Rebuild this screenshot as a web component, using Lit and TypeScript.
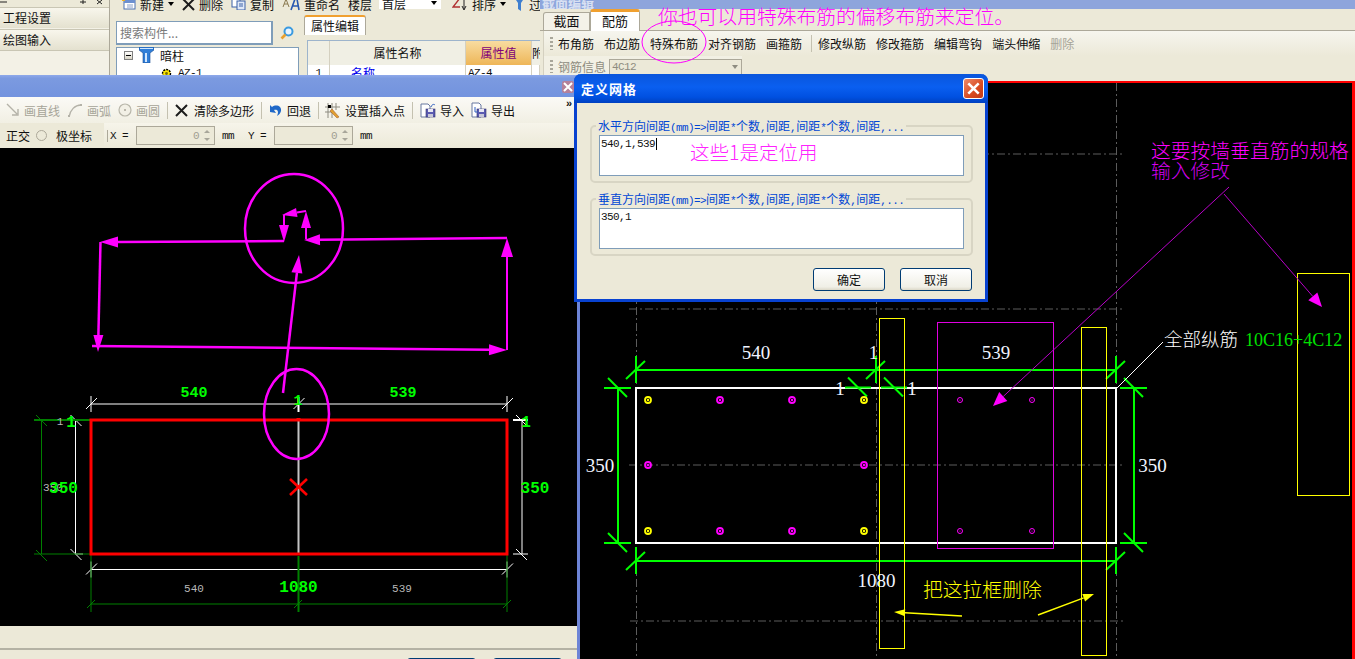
import { LitElement, html, svg, css } from "lit";
import { customElement } from "lit/decorators.js";

const MAGENTA = "#ff00ff";
const GREEN = "#00ff00";
const DKGREEN = "#008000";
const YELLOW = "#ffff00";

type Pt = [number, number];

function line(a: Pt, b: Pt, color: string, w = 1) {
  return svg`<line x1=${a[0]} y1=${a[1]} x2=${b[0]} y2=${b[1]} stroke=${color} stroke-width=${w} />`;
}

// line with a filled head at its end
function arrow(from: Pt, to: Pt, color: string, w: number, len: number, half: number, head = color) {
  const dx = to[0] - from[0];
  const dy = to[1] - from[1];
  const d = Math.hypot(dx, dy);
  const ux = dx / d;
  const uy = dy / d;
  const bx = to[0] - ux * len;
  const by = to[1] - uy * len;
  const pts = `${to[0]},${to[1]} ${bx - uy * half},${by + ux * half} ${bx + uy * half},${by - ux * half}`;
  return svg`${line(from, [bx, by], color, w)}<polygon points=${pts} fill=${head} />`;
}

function label(x: number, y: number, text: string, cls: string, anchor = "start") {
  return svg`<text x=${x} y=${y} class=${cls} text-anchor=${anchor}>${text}</text>`;
}

function rebar(x: number, y: number, color: string) {
  return svg`<circle cx=${x} cy=${y} r="3" fill="none" stroke=${color} stroke-width="1.8" /><circle cx=${x} cy=${y} r="1.2" fill=${color} />`;
}

const ICONS: Record<string, unknown> = {
  lineOff: svg`<svg width="14" height="14" viewBox="0 0 14 14"><path d="M1 1 L11 11 M12 6 V12 H6" fill="none" stroke="#b4b2a8" stroke-width="1.4"/></svg>`,
  arcOff: svg`<svg width="16" height="15" viewBox="0 0 16 15"><path d="M2 14 C3 7 8 2 14 2" fill="none" stroke="#b4b2a8" stroke-width="1.4"/><rect x="1" y="12" width="2" height="2" fill="#b4b2a8"/><rect x="13" y="1" width="2" height="2" fill="#b4b2a8"/></svg>`,
  circleOff: svg`<svg width="14" height="14" viewBox="0 0 14 14"><circle cx="7" cy="7" r="6" fill="#f2f0e6" stroke="#b8b6aa" stroke-width="1.2"/><circle cx="7" cy="7" r="1" fill="#a8a69a"/></svg>`,
  cross: svg`<svg width="13" height="13" viewBox="0 0 13 13"><path d="M1 1 L12 12 M12 1 L1 12" stroke="#1c1c1c" stroke-width="2"/></svg>`,
  undo: svg`<svg width="14" height="14" viewBox="0 0 14 14"><path d="M3 4 C7 1 13 3 12 8 C11.500 10 10 12 8 13 C10 9 9 6 5 7 L7 10 L1 9 L1 2 Z" fill="#1f68c8"/></svg>`,
  insert: svg`<svg width="17" height="17" viewBox="0 0 17 17"><path d="M4 1 V16 M8 1 V16 M12 1 V8 M1 5 H16 M1 10 H9" stroke="#8d8b80" stroke-width="1" fill="none"/><rect x="4" y="3" width="3" height="3" fill="#000"/><path d="M8 7 L15 15 L13 16 L6 9 Z" fill="#e0a030" stroke="#a05020" stroke-width="0.5"/></svg>`,
  importFile: svg`<svg width="16" height="16" viewBox="0 0 16 16"><path d="M1 2 H8 L10 4 V15 H1 Z" fill="#fff" stroke="#6878a0"/><rect x="6" y="7" width="9" height="8" fill="#5a5ab0" stroke="#33336f" stroke-width="0.6"/><rect x="8" y="7" width="5" height="3" fill="#e8e8f4"/><rect x="8" y="12" width="5" height="3" fill="#c8c8d8"/><path d="M11 5 C12 2 14 2 15 3" fill="none" stroke="#3060c0"/></svg>`,
  exportFile: svg`<svg width="16" height="16" viewBox="0 0 16 16"><path d="M1 1 H8 L10 3 V15 H1 Z" fill="#fff" stroke="#6878a0"/><rect x="6" y="7" width="9" height="8" fill="#5a5ab0" stroke="#33336f" stroke-width="0.6"/><rect x="8" y="7" width="5" height="3" fill="#e8e8f4"/><rect x="8" y="12" width="5" height="3" fill="#c8c8d8"/><path d="M4 5 V10 H7" fill="none" stroke="#3060c0"/></svg>`,
  newItem: svg`<svg width="14" height="12" viewBox="0 0 14 12"><rect x="2" y="2" width="11" height="9" fill="#fff" stroke="#4a70b0"/><rect x="2" y="2" width="11" height="3" fill="#6c90d0"/><rect x="0" y="0" width="3" height="3" fill="#f0b020"/><path d="M5 7 H11 M5 9 H11" stroke="#8aa0c8"/></svg>`,
  copy: svg`<svg width="15" height="12" viewBox="0 0 15 12"><rect x="1" y="0" width="8" height="9" fill="#fff" stroke="#3d62a8"/><rect x="6" y="3" width="8" height="9" fill="#dfe8f8" stroke="#3d62a8"/><path d="M8 6 H12 M8 8 H12" stroke="#3d62a8"/></svg>`,
  rename: svg`<svg width="18" height="14" viewBox="0 0 18 14"><path d="M1 10 L4 2 L7 10 M2 7 H6" fill="none" stroke="#8a7a50"/><path d="M9 13 L13 2 H15 L17 13 M11 9 H16" fill="none" stroke="#2858b0" stroke-width="1.6"/></svg>`,
  sort: svg`<svg width="16" height="14" viewBox="0 0 16 14"><path d="M1 1 H8 L1 10 H8" fill="none" stroke="#b03030" stroke-width="1.4"/><path d="M12 1 V12 M10 9 L12 13 L14 9" fill="none" stroke="#222"/></svg>`,
  filter: svg`<svg width="11" height="14" viewBox="0 0 11 14"><path d="M0 0 H11 L7 6 V14 L4 12 V6 Z" fill="#3f7fd0"/></svg>`,
  find: svg`<svg width="14" height="14" viewBox="0 0 14 14"><circle cx="8.500" cy="5.500" r="4" fill="#e8f4ff" stroke="#3a9ae0" stroke-width="2"/><path d="M5.500 8.500 L1.500 12.500" stroke="#e8a030" stroke-width="2.600"/></svg>`,
  column: svg`<svg width="15" height="16" viewBox="0 0 15 16"><path d="M0 0 H15 V3 L11 6 V16 H4 V6 L0 3 Z" fill="#2f7ed8" stroke="#1c4f96" stroke-width="0.6"/><rect x="6" y="6" width="2" height="9" fill="#cfe6ff"/><rect x="1" y="1" width="13" height="1" fill="#cfe6ff"/></svg>`,
  gear: svg`<svg width="11" height="11" viewBox="0 0 11 11"><circle cx="5.500" cy="5.500" r="4" fill="#ffe800" stroke="#000" stroke-width="1.4" stroke-dasharray="2 1"/><circle cx="5.500" cy="5.500" r="1.400" fill="#7a7000"/></svg>`,
  paneMarks: svg`<svg width="110" height="7" viewBox="0 0 110 7"><path d="M0 2 H7 M83 0 V4 M80 2 H86 M97 0 L102 4 M102 0 L97 4" stroke="#222" fill="none"/></svg>`,
};

const DRAW_TOOLS: (null | { icon: string; text: string; off?: boolean })[] = [
  { icon: "lineOff", text: "画直线", off: true },
  { icon: "arcOff", text: "画弧", off: true },
  { icon: "circleOff", text: "画圆", off: true },
  null,
  { icon: "cross", text: "清除多边形" },
  null,
  { icon: "undo", text: "回退" },
  null,
  { icon: "insert", text: "设置插入点" },
  null,
  { icon: "importFile", text: "导入" },
  { icon: "exportFile", text: "导出" },
];

const REBAR_TOOLS = ["布角筋", "布边筋", "特殊布筋", "对齐钢筋", "画箍筋", "|", "修改纵筋", "修改箍筋", "编辑弯钩", "端头伸缩"];

@customElement("app-root")
export class AppRoot extends LitElement {
  static styles = css`
    :host {
      display: block;
      width: 1355px;
      height: 659px;
      position: relative;
      overflow: hidden;
      background: #000;
      font-family: "Noto Sans CJK SC", "Liberation Sans", sans-serif;
      font-size: 12px;
      color: #111;
    }
    .hw,
    .coord,
    .tree-mono,
    .prop-text,
    .field,
    .info-select,
    .spin {
      font-family: "Liberation Mono", monospace;
      font-size: 11px;
      letter-spacing: -0.6px;
    }

    /* windows */
    .win {
      position: absolute;
      overflow: hidden;
      background: #ece9d8;
      display: flex;
      flex-direction: column;
    }
    .win-project {
      left: 0;
      top: 0;
      width: 540px;
      height: 75px;
      flex-direction: row;
    }
    .win-section {
      left: 540px;
      top: 0;
      width: 815px;
      height: 659px;
    }
    .win-poly {
      left: 0;
      top: 75px;
      width: 580px;
      height: 584px;
      border-right: 3px solid #6d84d6;
      box-sizing: border-box;
    }

    /* project window */
    .side {
      width: 110px;
      flex: none;
      box-sizing: border-box;
      border-right: 1px solid #aca899;
      background: #f3f1e6;
    }
    .side-head {
      height: 7px;
      background: #ece9d8;
      overflow: hidden;
    }
    .side-head svg {
      display: block;
    }
    .side-btn {
      height: 21px;
      line-height: 20px;
      padding-left: 3px;
      background: linear-gradient(#f8f6ec, #e4e1cf);
      border-top: 1px solid #c9c6b4;
      box-sizing: border-box;
    }
    .side-btn + .side-btn {
      margin-top: 1px;
      border-bottom: 1px solid #c9c6b4;
      height: 22px;
    }
    .project-main {
      flex: 1;
      min-width: 0;
      display: flex;
      flex-direction: column;
    }
    .top-tools {
      height: 8px;
      margin-bottom: 6px;
      display: flex;
      align-items: center;
      gap: 4px;
      padding-left: 12px;
      white-space: nowrap;
    }
    .top-tools > * {
      flex: none;
    }
    .top-gap {
      margin-left: 4px;
      display: flex;
    }
    .caret {
      width: 0;
      height: 0;
      border: 3px solid transparent;
      border-top: 4px solid #000;
      border-bottom: 0;
    }
    .floor {
      width: 62px;
      height: 22px;
      margin-top: -12px;
      background: #fff;
      padding: 12px 4px 0 3px;
      box-sizing: border-box;
      line-height: 10px;
      margin-left: 3px;
      margin-right: 3px;
      display: flex;
      justify-content: space-between;
      align-items: flex-start;
    }
    .floor .caret {
      margin-top: 2px;
    }
    .project-body {
      flex: 1;
      display: flex;
      min-height: 0;
    }
    .tree-col {
      width: 183px;
      margin-left: 6px;
      margin-top: 7px;
      flex: none;
      display: flex;
      flex-direction: column;
    }
    .search {
      display: flex;
      align-items: center;
      height: 24px;
      gap: 4px;
    }
    .search-input {
      width: 157px;
      height: 24px;
      box-sizing: border-box;
      border: 1px solid #7f9db9;
      border-width: 1px 2px 2px 1px;
      background: #fff;
      color: #7a7a7a;
      padding-left: 3px;
      line-height: 21px;
    }
    .search svg {
      margin-left: 3px;
    }
    .tree {
      margin-top: 2px;
      flex: 1;
      border: 1px solid #7f9db9;
      background: #fff;
      box-sizing: border-box;
      padding-left: 7px;
    }
    .tree-row {
      display: flex;
      align-items: center;
      height: 16px;
      gap: 6px;
      margin-top: -1px;
    }
    .tree-row + .tree-row {
      padding-left: 37px;
      margin-top: 2px;
    }
    .expander {
      width: 9px;
      height: 9px;
      border: 1px solid #808080;
      background: linear-gradient(#fff, #d8d4c4);
      box-sizing: border-box;
      position: relative;
    }
    .expander::after {
      content: "";
      position: absolute;
      left: 1px;
      right: 1px;
      top: 3px;
      height: 1px;
      background: #000;
    }
    .props {
      flex: 1;
      margin-left: 5px;
      padding-top: 1px;
      min-width: 0;
    }
    .prop-tab {
      width: 62px;
      height: 20px;
      box-sizing: border-box;
      background: #fff;
      border: 1px solid #aca899;
      border-top: 2px solid #f0a030;
      border-bottom: 0;
      border-radius: 3px 3px 0 0;
      padding-left: 6px;
      line-height: 18px;
    }
    .prop-table {
      margin: 5px 0 0 3px;
      border: 1px solid #9db4cc;
      border-right: 0;
      height: 40px;
      background: #fff;
    }
    .prop-row {
      display: grid;
      grid-template-columns: 22px 136px 66px 1fr;
      height: 24px;
      line-height: 24px;
      text-align: center;
    }
    .prop-row + .prop-row {
      line-height: 16px;
      height: 16px;
    }
    .prop-row > div {
      border-right: 1px solid #d4d0c0;
      white-space: nowrap;
    }
    .prop-head > div {
      background: #f0efe4;
    }
    .prop-head > .prop-value {
      background: linear-gradient(#f8dca0, #eeb658);
      color: #80007a;
    }
    .prop-name {
      color: #0000ee;
      text-align: left;
      padding-left: 21px;
    }
    .prop-text {
      text-align: left;
      padding-left: 2px;
    }

    /* title bars */
    .title {
      flex: none;
      background: linear-gradient(#8fa9ea 0, #7b9ae0 15%, #7393de 100%);
      position: relative;
    }
    .title-poly {
      height: 22px;
    }
    .title-section {
      height: 9px;
      background: #8ea5dc;
      color: #d8e0f2;
      line-height: 5px;
      padding-left: 2px;
      font-size: 13px;
      font-weight: 700;
      overflow: hidden;
    }
    .close-off {
      position: absolute;
      left: 562px;
      top: 6px;
      width: 12px;
      height: 12px;
      border-radius: 2px;
      background: #b4809a;
      display: grid;
      place-items: center;
    }

    /* draw window toolbars */
    .bar {
      flex: none;
      display: flex;
      align-items: center;
      white-space: nowrap;
    }
    .bar-draw {
      height: 26px;
      gap: 7px;
      padding-left: 6px;
      background: linear-gradient(#fbfaf6, #f1efe3);
      position: relative;
    }
    .bar-draw .tool:nth-child(5) {
      gap: 6px;
    }
    .bar-draw .sep:nth-child(8) {
      margin-right: -2px;
    }
    .bar-input {
      height: 25px;
      background: linear-gradient(#f6f4ea, #ece9d8);
    }
    .tool {
      display: flex;
      align-items: center;
      gap: 4px;
    }
    .off {
      color: #a6a498;
    }
    .sep {
      width: 1px;
      height: 17px;
      background: #c4c1b0;
      flex: none;
    }
    .more {
      position: absolute;
      left: 566px;
      top: 0;
      font-family: "Liberation Sans", sans-serif;
      font-weight: 700;
      font-size: 11px;
    }
    .ortho {
      width: 104px;
      height: 100%;
      flex: none;
      display: flex;
      align-items: center;
      box-sizing: border-box;
      padding-left: 6px;
      background: #ece9d8;
    }
    .radio {
      width: 11px;
      height: 11px;
      border-radius: 50%;
      border: 1px solid #aca899;
      box-sizing: border-box;
      margin: 0 9px 0 6px;
    }
    .coord-x {
      margin-left: 3px;
      padding-left: 2px;
      border-left: 1px solid #aca899;
      width: 26px;
      flex: none;
    }
    .coord-y {
      width: 26px;
      flex: none;
      margin-left: 14px;
    }
    .spin {
      width: 79px;
      height: 19px;
      flex: none;
      box-sizing: border-box;
      border: 1px solid #aca899;
      background: #ece9d8;
      display: flex;
      justify-content: flex-end;
      align-items: center;
      color: #a09e92;
      margin-right: 7px;
      gap: 5px;
      padding-right: 4px;
    }
    .spin-arrows {
      display: flex;
      flex-direction: column;
      gap: 5px;
    }
    .spin-arrows i {
      display: block;
      width: 0;
      height: 0;
      border: 3px solid transparent;
    }
    .spin-arrows i:first-child {
      border-bottom: 3px solid #a8a69a;
      border-top: 0;
    }
    .spin-arrows i:last-child {
      border-top: 3px solid #a8a69a;
      border-bottom: 0;
    }
    .canvas {
      flex: none;
      display: block;
      background: #000;
    }
    .poly-foot {
      flex: 1;
      border-top: 0;
      position: relative;
    }
    .poly-rule {
      margin-top: 22px;
      height: 2px;
      background: #b4b2a4;
    }
    .poly-actions {
      display: flex;
      gap: 17px;
      padding: 8px 0 0 407px;
    }
    .poly-actions span {
      width: 69px;
      height: 8px;
      flex: none;
      box-sizing: border-box;
      border: 1px solid #003c74;
      border-radius: 3px 3px 0 0;
      background: #f8f7f2;
    }

    /* section window */
    .tabs {
      flex: none;
      height: 22px;
      display: flex;
      align-items: flex-end;
      padding-left: 3px;
      box-sizing: border-box;
      border-bottom: 1px solid #aca899;
    }
    .tab {
      width: 47px;
      height: 18px;
      box-sizing: border-box;
      text-align: center;
      background: #f4f2e8;
      border: 1px solid #aca899;
      border-bottom: 0;
      border-radius: 3px 0 0 0;
      line-height: 16px;
      font-size: 13px;
    }
    .tab-on {
      width: 50px;
      height: 22px;
      margin-bottom: -1px;
      background: #fff;
      border-top: 3px solid #f0a030;
      border-radius: 3px 3px 0 0;
      line-height: 17px;
    }
    .rebar-bars {
      flex: none;
      height: 50px;
      margin-left: 3px;
      border-left: 1px solid #d4d0c0;
    }
    .bar-rebar {
      height: 25px;
      padding-left: 6px;
      background: linear-gradient(#f6f5ee, #ece9d8);
      gap: 10px;
    }
    .bar-rebar .sep {
      margin-right: -4px;
      margin-left: -1px;
    }
    .grip {
      width: 3px;
      height: 13px;
      flex: none;
      background: repeating-linear-gradient(#a8a69a 0 2px, transparent 2px 4px);
    }
    .bar-rebar .grip {
      margin-right: -5px;
    }
    .bar-info {
      height: 21px;
      padding-left: 6px;
      width: 198px;
      box-sizing: border-box;
      background: #f2f0e4;
      gap: 5px;
      color: #8e8c80;
    }
    .info-select {
      width: 133px;
      height: 16px;
      box-sizing: border-box;
      border: 1px solid #aca899;
      background: #ece9d8;
      display: flex;
      align-items: center;
      justify-content: space-between;
      padding: 0 3px 0 2px;
      margin-left: -2px;
    }
    .info-select .caret {
      margin: 0;
      border-top-color: #8e8c80;
    }
    .canvas-wrap {
      flex: none;
      margin-left: 38px;
      height: 578px;
      background: #000;
      border-top: 2px solid #f00;
      border-right: 3px solid #f00;
      border-left: 2px solid #6d84d6;
    }

    /* grid dialog */
    .dialog {
      position: absolute;
      left: 574px;
      top: 74px;
      width: 414px;
      height: 228px;
      box-sizing: border-box;
      border: 3px solid #0842d0;
      border-top: 0;
      border-radius: 7px 7px 0 0;
      background: #ece9d8;
      display: flex;
      flex-direction: column;
    }
    .dlg-title {
      flex: none;
      height: 29px;
      margin: 0 -3px;
      border-radius: 7px 7px 0 0;
      background: linear-gradient(#0a56dc 0, #0a5ff0 45%, #0050e0 80%, #0040c0 100%);
      display: flex;
      align-items: center;
      justify-content: space-between;
      padding: 0 4px 0 7px;
      color: #fff;
      font-weight: 700;
      font-size: 13px;
      letter-spacing: 1px;
    }
    .dlg-close {
      width: 21px;
      height: 21px;
      box-sizing: border-box;
      border: 1px solid #fff;
      border-radius: 3px;
      background: linear-gradient(135deg, #ee8a6a, #d84a20 60%, #c03a18);
      display: grid;
      place-items: center;
    }
    .dlg-body {
      flex: 1;
      display: flex;
      flex-direction: column;
      padding: 15px 12px 0 13px;
    }
    fieldset {
      margin: 0 0 8px;
      padding: 0 7px;
      height: 65px;
      box-sizing: border-box;
      border: 2px solid #d8d5c4;
      border-radius: 5px;
      min-width: 0;
    }
    legend {
      padding: 0 2px;
      margin-left: -3px;
      height: 15px;
      color: #0046d5;
      font-size: 12px;
      line-height: 15px;
      white-space: nowrap;
    }
    .field {
      height: 41px;
      box-sizing: border-box;
      margin-top: 2px;
      border: 1px solid #7f9db9;
      background: #fff;
      padding: 1px 1px;
      line-height: 14px;
    }
    .text-caret {
      border-right: 1px solid #000;
      padding-right: 1px;
    }
    .dlg-actions {
      display: flex;
      justify-content: flex-end;
      gap: 15px;
      margin-top: 4px;
      padding-right: 1px;
    }
    .dlg-btn {
      width: 72px;
      height: 23px;
      box-sizing: border-box;
      border: 1px solid #003c74;
      border-radius: 3px;
      background: linear-gradient(#fff, #f0efe6 85%, #dcd8c8);
      display: grid;
      place-items: center;
    }

    /* free canvases */
    svg text {
      font-family: "Noto Sans CJK SC", sans-serif;
    }
    .overlay {
      position: absolute;
      left: 0;
      top: 0;
      pointer-events: none;
    }
    svg .note {
      font-size: 19.800px;
      fill: #ff00ff;
      font-weight: 300;
    }
    svg .note-purple {
      font-size: 19.800px;
      fill: #d400f0;
      font-weight: 300;
    }
    svg .note-yellow {
      font-size: 19.800px;
      fill: #ffff00;
      font-weight: 300;
    }
    svg .dim {
      font-family: "Liberation Serif", serif;
      font-size: 19px;
      fill: #f0f4ff;
    }
    svg .dim-cjk {
      font-size: 18.500px;
      fill: #fff;
      font-weight: 300;
    }
    svg .dim-green {
      font-family: "Liberation Serif", serif;
      font-size: 18px;
      fill: #00e000;
    }
    svg .mono-green {
      font-family: "Liberation Mono", monospace;
      font-size: 15px;
      font-weight: 700;
      fill: #00ff00;
    }
    svg .mono-big {
      font-family: "Liberation Mono", monospace;
      font-size: 16px;
      font-weight: 700;
      fill: #00ff00;
    }
    svg .mono-gray {
      font-family: "Liberation Mono", monospace;
      font-size: 11px;
      fill: #b8b8b8;
    }
    svg .dlg-note {
      font-size: 19.500px;
      fill: #ff22ff;
      font-weight: 300;
    }
  `;

  private projectWindow() {
    return html`<div class="win win-project">
      <div class="side">
        <div class="side-head">${ICONS.paneMarks}</div>
        <div class="side-btn">工程设置</div>
        <div class="side-btn">绘图输入</div>
      </div>
      <div class="project-main">
        <div class="top-tools">
          ${ICONS.newItem}<span>新建</span><i class="caret"></i>
          <span class="top-gap">${ICONS.cross}</span><span>删除</span>
          <span class="top-gap">${ICONS.copy}</span><span>复制</span>
          <span class="top-gap">${ICONS.rename}</span><span>重命名</span>
          <span class="top-gap">楼层</span>
          <div class="floor"><span>首层</span><i class="caret"></i></div>
          <span class="top-gap">${ICONS.sort}</span><span>排序</span><i class="caret"></i>
          <span class="top-gap">${ICONS.filter}</span><span>过滤</span>
        </div>
        <div class="project-body">
          <div class="tree-col">
            <div class="search">
              <div class="search-input">搜索构件...</div>
              ${ICONS.find}
            </div>
            <div class="tree">
              <div class="tree-row"><i class="expander"></i>${ICONS.column}<span>暗柱</span></div>
              <div class="tree-row">${ICONS.gear}<span class="tree-mono">AZ-1</span></div>
            </div>
          </div>
          <div class="props">
            <div class="prop-tab">属性编辑</div>
            <div class="prop-table">
              <div class="prop-row prop-head">
                <div></div><div>属性名称</div><div class="prop-value">属性值</div><div>附加</div>
              </div>
              <div class="prop-row">
                <div class="tree-mono">1</div><div class="prop-name">名称</div><div class="prop-text">AZ-4</div><div></div>
              </div>
            </div>
          </div>
        </div>
      </div>
    </div>`;
  }

  private polyDrawing() {
    const wTick = (x: number, y: number, c = "#fff") => svg`
      ${line([x, y - 8], [x, y + 8], c)}${line([x - 5, y + 5], [x + 6, y - 6], c)}`;
    const sideTick = (x: number, y: number, c = "#fff") => svg`
      ${line([x - 5, y - 5], [x + 6, y + 6], c)}`;
    return svg`
      ${line([91, 404], [507, 404], "#fff")}
      ${wTick(91, 404)}${wTick(298.5, 404)}${wTick(507, 404)}
      ${line([91, 569.5], [507, 569.5], "#fff")}
      ${wTick(91, 569.5)}${wTick(507, 569.5)}
      ${line([75.5, 420], [75.5, 554], "#fff")}
      ${line([75, 420], [83, 420], "#fff", 2)}${line([75, 554], [83, 554], "#fff")}
      ${sideTick(75.5, 420)}${sideTick(75.5, 554)}
      ${line([522, 420], [522, 554], "#fff")}
      ${line([513, 420], [528, 420], "#fff", 2)}${line([513, 554], [528, 554], "#fff")}
      ${sideTick(521, 420)}${sideTick(521, 554)}

      ${line([34, 420], [90, 420], DKGREEN, 2)}${line([34, 554], [90, 554], DKGREEN)}
      ${line([41.5, 420], [41.5, 554], DKGREEN)}
      ${sideTick(41, 420, DKGREEN)}${sideTick(41, 555, DKGREEN)}
      ${line([91, 554], [91, 612], DKGREEN)}
      ${line([298.5, 556], [298.5, 612], DKGREEN, 2)}
      ${line([507, 554], [507, 612], DKGREEN)}
      ${line([91, 604], [507, 604], DKGREEN)}
      ${line([87, 608], [95, 600], DKGREEN)}${line([294, 608], [302, 600], DKGREEN)}${line([503, 608], [511, 600], DKGREEN)}

      ${line([298.5, 420], [298.5, 554], "#c4c4c4", 2)}
      ${line([298.5, 397], [298.5, 412], "#fff", 2)}
      <rect x="91" y="420" width="416" height="134" fill="none" stroke="#f00" stroke-width="3" />
      ${line([296.5, 419], [300.5, 419], "#f00", 2)}
      ${line([290, 479], [307, 495], "#f00", 2.5)}${line([307, 479], [290, 495], "#f00", 2.5)}

      ${label(194, 397, "540", "mono-green", "middle")}
      ${label(403, 397, "539", "mono-green", "middle")}
      ${label(298, 405, "1", "mono-green", "middle")}
      ${label(60, 425, "1", "mono-gray", "middle")}
      ${label(71, 427, "1", "mono-big", "middle")}
      ${label(526, 427, "1", "mono-big", "middle")}
      ${label(53, 491, "350", "mono-gray", "middle")}
      ${label(63.5, 493, "350", "mono-big", "middle")}
      ${label(535, 493, "350", "mono-big", "middle")}
      ${label(194, 592, "540", "mono-gray", "middle")}
      ${label(402, 592, "539", "mono-gray", "middle")}
      ${label(298.5, 592, "1080", "mono-big", "middle")}

      ${arrow([507, 350], [507, 238], MAGENTA, 2, 19, 6)}
      ${arrow([507, 238], [304, 240], MAGENTA, 2.5, 16, 5.5)}
      ${arrow([306, 239], [306, 211], MAGENTA, 2, 17, 5)}
      ${arrow([306, 211], [282, 215], MAGENTA, 2, 15, 4.5)}
      ${arrow([284, 215], [284, 242], MAGENTA, 2, 17, 5)}
      ${arrow([284, 241], [100, 242], MAGENTA, 2.5, 18, 5.5)}
      ${arrow([100.5, 242], [98, 352], MAGENTA, 2.5, 17, 5)}
      ${arrow([92, 346], [507, 350], MAGENTA, 2.5, 18, 5.5)}
      ${arrow([283, 393], [299, 255], MAGENTA, 2.5, 18, 5.5)}
      <ellipse cx="294" cy="228.5" rx="49" ry="54.5" fill="none" stroke=${MAGENTA} stroke-width="2.5" />
      <ellipse cx="296.5" cy="414" rx="32.5" ry="45" fill="none" stroke=${MAGENTA} stroke-width="2.5" />
    `;
  }

  private sectionDrawing() {
    const dash = (a: Pt, b: Pt) =>
      svg`<line x1=${a[0]} y1=${a[1]} x2=${b[0]} y2=${b[1]} stroke="#5c5c5c" stroke-width="1" stroke-dasharray="8 3 2 3" />`;
    const vTick = (x: number, y: number) => svg`
      ${line([x, y - 14], [x, y + 13], GREEN, 2)}${line([x - 10, y + 9], [x + 9, y - 9], GREEN, 2)}`;
    const hTick = (x: number, y: number, left: number, right: number) => svg`
      ${line([left, y], [right, y], GREEN, 2)}${line([x - 10, y - 10], [x + 9, y + 9], GREEN, 2)}`;
    const dots: [number, number, string][] = [
      [648, 400, YELLOW], [720, 400, MAGENTA], [792, 400, MAGENTA], [864, 400, YELLOW],
      [648, 465, MAGENTA], [864, 465, MAGENTA],
      [648, 531, YELLOW], [720, 531, MAGENTA], [792, 531, MAGENTA], [864, 531, YELLOW],
    ];
    const small: Pt[] = [[960, 400], [1032, 400], [960, 531], [1032, 531]];
    return svg`
      ${dash([636.5, 83], [636.5, 659])}${dash([876.5, 83], [876.5, 659])}${dash([1116.5, 83], [1116.5, 659])}
      ${dash([629, 154], [1124, 154])}${dash([629, 309], [1124, 309])}
      ${dash([629, 465], [1124, 465])}${dash([630, 621], [1124, 621])}

      <rect x="636" y="388" width="480" height="155" fill="none" stroke="#fff" stroke-width="2" />
      ${line([636, 370], [1116, 370], GREEN, 2)}
      ${line([636, 561], [1116, 561], GREEN, 2)}
      ${line([618, 388], [618, 543], GREEN, 2)}
      ${line([1134, 388], [1134, 543], GREEN, 2)}
      ${vTick(636, 370)}${vTick(876, 370)}${vTick(1116, 370)}
      ${vTick(636, 561)}${vTick(1116, 561)}
      ${hTick(618, 388, 604, 631)}${hTick(618, 543, 604, 631)}
      ${hTick(1134, 388, 1120, 1147)}${hTick(1134, 543, 1120, 1147)}
      ${hTick(858, 387.5, 845, 871)}${hTick(894, 387.5, 881, 907)}

      ${dots.map(([x, y, c]) => rebar(x, y, c))}
      ${small.map(([x, y]) => svg`<circle cx=${x} cy=${y} r="2.5" fill="none" stroke=${MAGENTA} /><circle cx=${x} cy=${y} r="0.6" fill=${MAGENTA} />`)}

      <rect x="879.5" y="318.5" width="25" height="330" fill="none" stroke=${YELLOW} />
      <rect x="1081.5" y="327.5" width="25" height="328" fill="none" stroke=${YELLOW} />
      <rect x="1297.5" y="273.5" width="52" height="222" fill="none" stroke=${YELLOW} />
      <rect x="937.5" y="322.5" width="116" height="226" fill="none" stroke="#e000e0" />

      ${label(756, 359, "540", "dim", "middle")}
      ${label(996, 359, "539", "dim", "middle")}
      ${label(873.5, 359, "1", "dim", "middle")}
      ${label(840, 395, "1", "dim", "middle")}
      ${label(912, 395, "1", "dim", "middle")}
      ${label(600, 472, "350", "dim", "middle")}
      ${label(1152.5, 472, "350", "dim", "middle")}
      ${label(876.5, 587, "1080", "dim", "middle")}
      ${label(1164, 346, "全部纵筋", "dim-cjk")}
      ${label(1245, 346, "10C16+4C12", "dim-green")}
      ${line([1117, 388], [1163, 342], "#fff")}

      ${label(1151, 158, "这要按墙垂直筋的规格", "note")}
      ${label(1151, 178, "输入修改", "note-purple")}
      ${arrow([1229, 187], [993, 406], "#b800c8", 1, 14, 6, MAGENTA)}
      ${arrow([1224, 194], [1322, 307], "#b800c8", 1, 14, 6, MAGENTA)}

      ${label(923, 597, "把这拉框删除", "note-yellow")}
      ${arrow([962, 616], [894, 612], YELLOW, 1.5, 11, 3.5)}
      ${arrow([1038, 615], [1094, 594], YELLOW, 1.5, 11, 4)}
    `;
  }

  private closeGlyph(size: number, w: number) {
    return svg`<svg width=${size} height=${size} viewBox="0 0 10 10"><path d="M1 1 L9 9 M9 1 L1 9" stroke="#fff" stroke-width=${w} /></svg>`;
  }

  private spinBox() {
    return html`<div class="spin">0<div class="spin-arrows"><i></i><i></i></div></div>`;
  }

  private polyWindow() {
    return html`<div class="win win-poly">
      <div class="title title-poly"><div class="close-off">${this.closeGlyph(10, 2)}</div></div>
      <div class="bar bar-draw">
        ${DRAW_TOOLS.map((t) =>
          t
            ? html`<div class="tool ${t.off ? "off" : ""}">${ICONS[t.icon]}<span>${t.text}</span></div>`
            : html`<i class="sep"></i>`
        )}
        <span class="more">»</span>
      </div>
      <div class="bar bar-input">
        <div class="ortho">正交<i class="radio"></i>极坐标</div>
        <span class="coord coord-x">X =</span>
        ${this.spinBox()}
        <span class="coord">mm</span>
        <span class="coord coord-y">Y =</span>
        ${this.spinBox()}
        <span class="coord">mm</span>
      </div>
      <svg class="canvas" width="577" height="478" viewBox="0 148 577 478">${this.polyDrawing()}</svg>
      <div class="poly-foot">
        <div class="poly-rule"></div>
        <div class="poly-actions"><span></span><span></span></div>
      </div>
    </div>`;
  }

  private sectionWindow() {
    return html`<div class="win win-section">
      <div class="title title-section">截面编辑</div>
      <div class="tabs">
        <div class="tab">截面</div>
        <div class="tab tab-on">配筋</div>
      </div>
      <div class="rebar-bars">
        <div class="bar bar-rebar">
          <i class="grip"></i>
          ${REBAR_TOOLS.map((t) => (t === "|" ? html`<i class="sep"></i>` : html`<span>${t}</span>`))}
          <span class="off">删除</span>
        </div>
        <div class="bar bar-info">
          <i class="grip"></i><span>钢筋信息</span>
          <div class="info-select">4C12<i class="caret"></i></div>
        </div>
      </div>
      <div class="canvas-wrap">
        <svg class="canvas" width="772" height="578" viewBox="580 83 772 578">${this.sectionDrawing()}</svg>
      </div>
    </div>`;
  }

  private dialog() {
    const rule = html`<span class="hw">(mm)=&gt;</span>间距<span class="hw">*</span>个数<span class="hw">,</span>间距<span class="hw">,</span>间距<span class="hw">*</span>个数<span class="hw">,</span>间距<span class="hw">,...</span>`;
    return html`<div class="dialog">
      <div class="dlg-title">
        <span>定义网格</span>
        <div class="dlg-close">${this.closeGlyph(13, 2)}</div>
      </div>
      <div class="dlg-body">
        <fieldset>
          <legend>水平方向间距${rule}</legend>
          <div class="field"><span class="text-caret">540,1,539</span></div>
        </fieldset>
        <fieldset>
          <legend>垂直方向间距${rule}</legend>
          <div class="field">350,1</div>
        </fieldset>
        <div class="dlg-actions">
          <div class="dlg-btn">确定</div>
          <div class="dlg-btn">取消</div>
        </div>
      </div>
    </div>`;
  }

  render() {
    return html`
      ${this.sectionWindow()}
      ${this.projectWindow()}
      ${this.polyWindow()}
      ${this.dialog()}
      <svg class="overlay" width="1355" height="659" viewBox="0 0 1355 659">
        ${label(658, 24, "你也可以用特殊布筋的偏移布筋来定位。", "note")}
        <ellipse cx="674" cy="42" rx="32" ry="21" fill="none" stroke=${MAGENTA} stroke-width="1" />
        ${label(690, 160, "这些1是定位用", "dlg-note")}
      </svg>
    `;
  }
}
